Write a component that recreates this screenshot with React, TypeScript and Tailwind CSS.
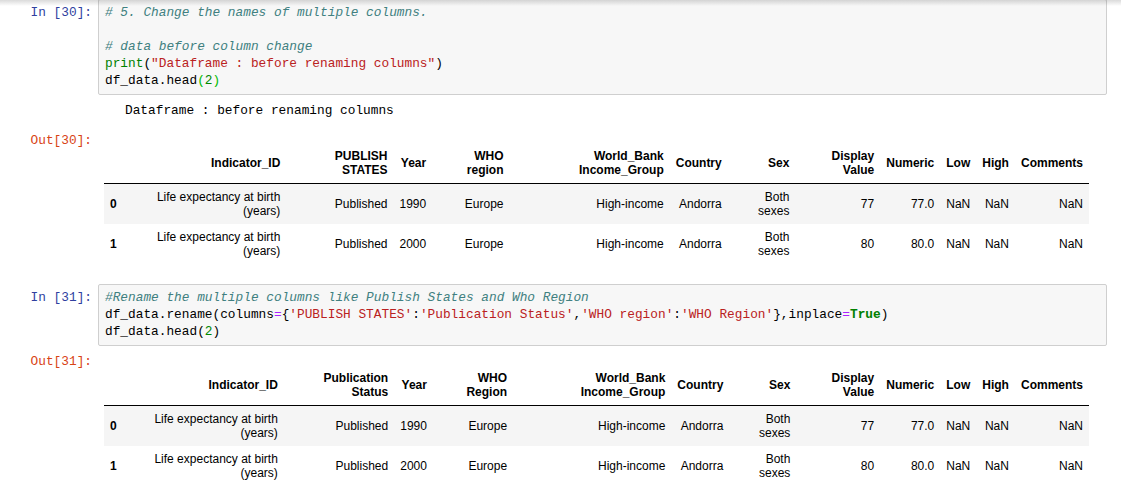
import React from 'react';

const mono = "font-['Liberation_Mono',monospace] text-[12.8px] leading-[17px] whitespace-pre";

// jupyter syntax colours
const cmt = 'text-[#408080] italic';
const str = 'text-[#ba2121]';
const num = 'text-[#008800]';
const builtin = 'text-[#008000]';
const op = 'text-[#aa22ff]';
const kw = 'text-[#008000] font-bold';
const match = 'text-[#00bb00]';

const headers1 = ['', 'Indicator_ID', 'PUBLISH STATES', 'Year', 'WHO region', 'World_Bank Income_Group', 'Country', 'Sex', 'Display Value', 'Numeric', 'Low', 'High', 'Comments'];
const headers2 = ['', 'Indicator_ID', 'Publication Status', 'Year', 'WHO Region', 'World_Bank Income_Group', 'Country', 'Sex', 'Display Value', 'Numeric', 'Low', 'High', 'Comments'];

const rows = [
  ['0', 'Life expectancy at birth (years)', 'Published', '1990', 'Europe', 'High-income', 'Andorra', 'Both sexes', '77', '77.0', 'NaN', 'NaN', 'NaN'],
  ['1', 'Life expectancy at birth (years)', 'Published', '2000', 'Europe', 'High-income', 'Andorra', 'Both sexes', '80', '80.0', 'NaN', 'NaN', 'NaN'],
];

function DataFrame({ headers }: { headers: string[] }) {
  return (
    <div className="w-[985px]">
      <table className="border-collapse font-['Liberation_Sans',Arial,sans-serif] text-[12px] leading-[normal] text-black">
        <thead>
          <tr>
            {headers.map((h, i) => (
              <th key={i} className="border-b border-black p-[6px] text-right align-middle font-bold">
                {h}
              </th>
            ))}
          </tr>
        </thead>
        <tbody>
          {rows.map((r, ri) => (
            <tr key={ri} className={ri % 2 === 0 ? 'bg-[#f5f5f5]' : 'bg-white'}>
              {r.map((c, ci) =>
                ci === 0 ? (
                  <th key={ci} className="p-[6px] text-right align-middle font-bold">{c}</th>
                ) : (
                  <td key={ci} className="p-[6px] text-right align-middle font-normal">{c}</td>
                )
              )}
            </tr>
          ))}
        </tbody>
      </table>
    </div>
  );
}

function InPrompt({ n }: { n: number }) {
  return (
    <div className={`w-[98px] shrink-0 pr-[6px] pt-[5px] text-right text-[#303f9f] ${mono}`}>In [{n}]:</div>
  );
}

function OutPrompt({ n }: { n: number }) {
  return <div className={`w-[98px] shrink-0 pr-[6px] text-right text-[#d84315] ${mono}`}>Out[{n}]:</div>;
}

export default function App() {
  return (
    <div className="relative h-[495px] w-[1121px] overflow-hidden bg-white text-black">
      {/* header shadow bleeding over the top */}
      <div className="pointer-events-none absolute inset-x-0 top-0 z-10 h-[6px] bg-linear-to-b from-[rgba(87,87,87,0.22)] to-transparent" />

      {/* cell 30 */}
      <div className="mt-[-1px] flex">
        <InPrompt n={30} />
        <div className={`w-[1009px] rounded-[2px] border border-[#cfcfcf] bg-[#f7f7f7] pb-[5px] pl-[6px] pt-[4px] ${mono}`}>
          <div className={cmt}># 5. Change the names of multiple columns.</div>
          <div>{' '}</div>
          <div className={cmt}># data before column change</div>
          <div>
            <span className={builtin}>print</span>(<span className={str}>"Dataframe : before renaming columns"</span>)
          </div>
          <div>
            df_data.head<span className={match}>(</span>
            <span className={num}>2</span>
            <span className={match}>)</span>
          </div>
        </div>
      </div>

      <div className={`mt-[7px] pl-[125px] ${mono}`}>Dataframe : before renaming columns</div>

      <div className="mt-[13px] flex">
        <OutPrompt n={30} />
        <div className="pl-[6px] pt-[11px]">
          <DataFrame headers={headers1} />
        </div>
      </div>

      {/* cell 31 */}
      <div className="mt-[20px] flex">
        <InPrompt n={31} />
        <div className={`w-[1009px] rounded-[2px] border border-[#cfcfcf] bg-[#f7f7f7] pb-[5px] pl-[6px] pt-[4px] ${mono}`}>
          <div className={cmt}>#Rename the multiple columns like Publish States and Who Region</div>
          <div>
            df_data.rename(columns<span className={op}>=</span>{'{'}
            <span className={str}>'PUBLISH STATES'</span>:<span className={str}>'Publication Status'</span>,
            <span className={str}>'WHO region'</span>:<span className={str}>'WHO Region'</span>
            {'},inplace'}
            <span className={op}>=</span>
            <span className={kw}>True</span>)
          </div>
          <div>
            df_data.head(<span className={num}>2</span>)
          </div>
        </div>
      </div>

      <div className="mt-[7px] flex">
        <OutPrompt n={31} />
        <div className="pl-[6px] pt-[12px]">
          <DataFrame headers={headers2} />
        </div>
      </div>
    </div>
  );
}
